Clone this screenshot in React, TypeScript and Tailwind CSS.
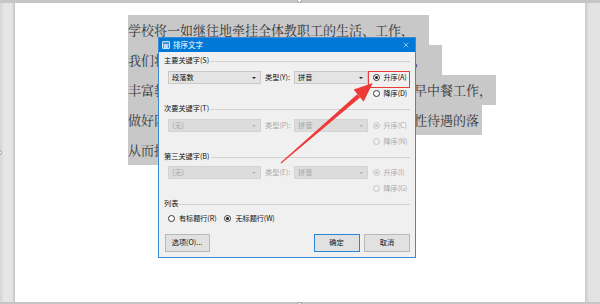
import React from 'react';
import clsx from 'clsx';
import { X } from 'lucide-react';

// document lines behind the dialog, with the width of each highlight block
const LINES = [
  { text: '学校将一如继往地牵挂全体教职工的生活、工作，', w: 'w-[301px]' },
  { text: '我们将一如既往地做好教职工的后勤保障服务工作，', w: 'w-[314px]' },
  { text: '丰富教职工的业余文化生活，并继续做好教职工的早中餐工作，', w: 'w-[368px]' },
  { text: '做好困难教职工的帮扶工作，切实保障教职工福利性待遇的落', w: 'w-[354px]' },
  { text: '从而提高教职工的工作积极性。', w: 'w-[196px]' },
];

const Radio = ({
  label,
  checked,
  disabled,
}: {
  label: string;
  checked?: boolean;
  disabled?: boolean;
}) => (
  <div className="flex items-center gap-[4px]">
    <span
      className={clsx(
        'w-[7px] h-[7px] rounded-full border flex items-center justify-center shrink-0',
        disabled ? 'border-[#c6c6c6] bg-[#f0f0f0]' : 'border-[#333333] bg-white'
      )}
    >
      {checked && (
        <span
          className={clsx('w-[3px] h-[3px] rounded-full', disabled ? 'bg-[#c6c6c6]' : 'bg-[#1a1a1a]')}
        />
      )}
    </span>
    <span
      className={clsx(
        'leading-none whitespace-nowrap tracking-[-0.1px]',
        disabled ? 'text-[#a9a9a9]' : 'text-[#111]'
      )}
    >
      {label}
    </span>
  </div>
);

const Select = ({
  value,
  className,
  disabled,
}: {
  value: string;
  className: string;
  disabled?: boolean;
}) => (
  <div
    className={clsx(
      'h-[12.5px] flex items-center justify-between pl-[3px] pr-[4.5px] border shrink-0',
      disabled ? 'bg-[#dcdcdc] border-[#d3d3d3] text-[#a6a6a6]' : 'bg-[#e4e4e4] border-[#cacaca] text-[#111]',
      className
    )}
  >
    <span className="leading-none">{value}</span>
    <span
      className={clsx(
        'w-0 h-0 border-l-[2px] border-r-[2px] border-t-[2.5px] border-l-transparent border-r-transparent',
        disabled ? 'border-t-[#b4b4b4]' : 'border-t-[#222]'
      )}
    />
  </div>
);

const GroupLabel = ({ text, className }: { text: string; className?: string }) => (
  <div className={clsx('flex items-center h-[10px] gap-[1px]', className)}>
    <span className="leading-none text-[#111] whitespace-nowrap">{text}</span>
    <div className="flex-1 h-px bg-[#d2d2d2]" />
  </div>
);

const KeyRow = ({
  field,
  typeLabel,
  up,
  down,
  disabled,
  className,
  marked,
}: {
  field: string;
  typeLabel: string;
  up: string;
  down: string;
  disabled?: boolean;
  className?: string;
  marked?: boolean;
}) => (
  <div className={className}>
    <div className="flex items-center h-[13px] pl-[4px]">
      <Select value={field} className="w-[93px]" disabled={disabled} />
      <span
        className={clsx('w-[33px] pl-[4px] leading-none whitespace-nowrap', disabled ? 'text-[#a9a9a9]' : 'text-[#111]')}
      >
        {typeLabel}
      </span>
      <Select value="拼音" className="w-[74px]" disabled={disabled} />
      <div className="relative flex-1 pl-[4.5px]">
        <Radio label={up} checked disabled={disabled} />
        {marked && (
          <div className="absolute left-0 -top-[3px] w-[42px] h-[17px] border-[1.5px] border-[#eb3b36]" />
        )}
      </div>
    </div>
    <div className="flex items-center h-[10px] mt-[5px] pl-[208.5px]">
      <Radio label={down} disabled={disabled} />
    </div>
  </div>
);

const Button = ({ label, primary, className }: { label: string; primary?: boolean; className: string }) => (
  <div
    className={clsx(
      'h-[18px] flex items-center justify-center bg-[#e1e1e1] text-[#111] leading-none',
      primary ? 'border-[1.5px] border-[#2b84d8]' : 'border border-[#b9b9b9]',
      className
    )}
  >
    {label}
  </div>
);

const SortDialog = () => (
  <div className="absolute left-[158px] top-[37px] w-[258px] h-[221px] border border-[#3b8ad9] flex flex-col text-[7.2px] font-['Noto_Sans_CJK_SC','Noto_Sans',sans-serif]">
    <div className="h-[14px] bg-[#0078d7] flex items-center pl-[3px] pr-[5px] text-white text-[7.5px] shrink-0">
      <span className="w-[7.5px] h-[7.5px] border border-[#cfe6fb] bg-[#3a94e4] rounded-[1px] flex items-center justify-center text-[5px] font-bold leading-none">
        W
      </span>
      <span className="ml-[3.5px] leading-none">排序文字</span>
      <X className="ml-auto" size={8} strokeWidth={1.6} />
    </div>
    <div className="flex-1 bg-[#f0f0f0] pl-[5px] pr-[5px] pt-[4px] flex flex-col">
      <GroupLabel text="主要关键字(S)" />
      <KeyRow className="mt-[5px]" field="段落数" typeLabel="类型(Y):" up="升序(A)" down="降序(D)" marked />
      <GroupLabel className="mt-[5px]" text="次要关键字(T)" />
      <KeyRow className="mt-[5px]" field="(无)" typeLabel="类型(P):" up="升序(C)" down="降序(N)" disabled />
      <GroupLabel className="mt-[5px]" text="第三关键字(B)" />
      <KeyRow className="mt-[4px]" field="(无)" typeLabel="类型(E):" up="升序(I)" down="降序(G)" disabled />
      <GroupLabel className="mt-[5px]" text="列表" />
      <div className="flex items-center h-[10px] mt-[5px] pl-[4px] gap-[8px]">
        <Radio label="有标题行(R)" />
        <Radio label="无标题行(W)" checked />
      </div>
      <div className="flex items-center mt-[10px]">
        <Button label="选项(O)..." className="w-[45px] ml-[0.5px]" />
        <Button label="确定" primary className="w-[46px] ml-auto" />
        <Button label="取消" className="w-[46px] ml-[4.5px]" />
      </div>
    </div>
  </div>
);

const Arrow = () => (
  <svg className="absolute inset-0 pointer-events-none" width={600} height={304} viewBox="0 0 600 304">
    <polygon points="281.3,163.4 280.7,162.6 357.2,94.2 360.1,97.5" fill="#ee3a36" />
    <polygon points="353.6,89.6 372.8,83 363.6,101.8" fill="#ee3a36" />
  </svg>
);

const Handle = ({ className }: { className: string }) => (
  <span className={clsx('absolute w-[5px] h-[5px] rounded-full border border-[#9a9a9a] bg-white', className)} />
);

export default function App() {
  return (
    <div className="relative w-[600px] h-[304px] overflow-hidden bg-[#c9c9c9] flex flex-col">
      <div className="h-[3px] shrink-0 bg-[#c6c6c6]" />
      <div className="flex-1 flex">
        <div className="w-[15px] bg-[linear-gradient(to_right,#d4d4d4,#e6e6e6_30%,#e4e4e4_80%,#c2c2c2)]" />
        <div className="flex-1 bg-white pl-[113px] pt-[12px] flex flex-col font-['Noto_Serif_CJK_SC','Noto_Sans_CJK_SC',serif] text-[13px] text-[#363636]">
          {LINES.map((l) => (
            <div key={l.text} className={clsx('h-[30px] bg-[#c8c8c8] flex items-center whitespace-nowrap', l.w)}>
              {l.text}
            </div>
          ))}
        </div>
        <div className="w-[15px] bg-[linear-gradient(to_right,#c8c8c8,#e2e2e2_25%,#e3e3e3)]" />
      </div>
      <div className="h-[2px] shrink-0 bg-[#c6c6c6]" />

      <SortDialog />
      <Arrow />

      <Handle className="left-[297px] -top-[2px]" />
      <Handle className="-left-[3px] top-[150px]" />
      <Handle className="left-[297px] -bottom-[3px]" />
    </div>
  );
}
